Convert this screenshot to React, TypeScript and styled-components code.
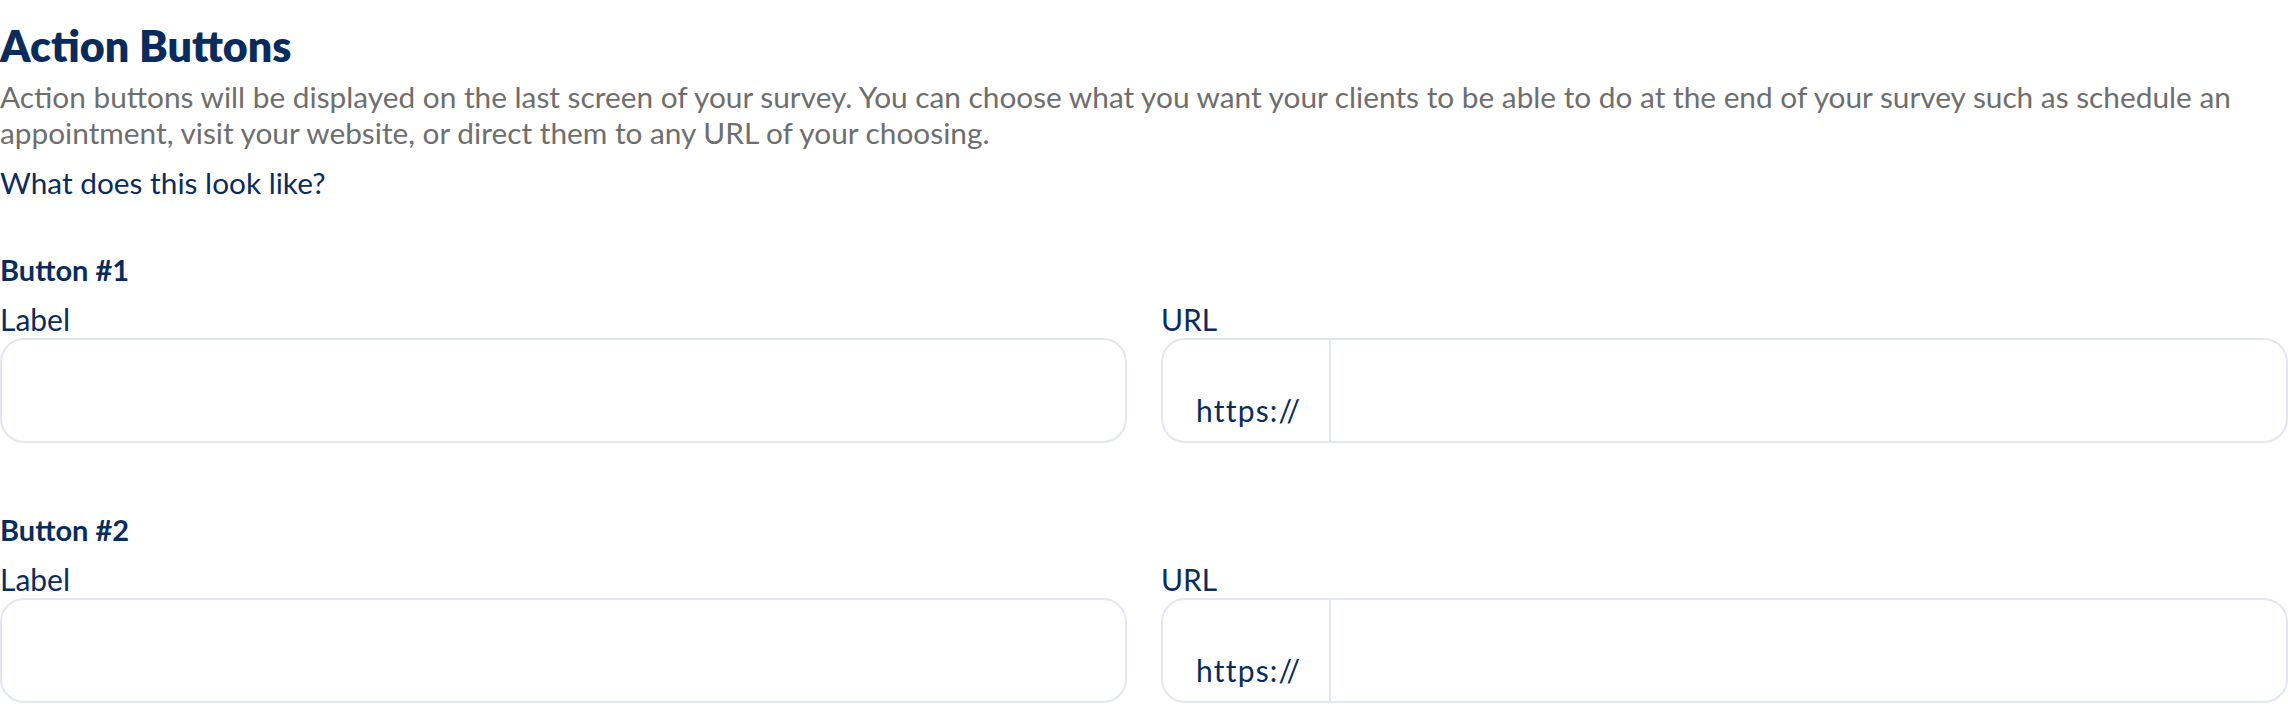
import React from 'react';
import styled, {createGlobalStyle} from 'styled-components';

const NAVY = '#0a2c5c';
const GREY = '#6e6e6e';
const BORDER = '#e2e7ee';

const GlobalStyle = createGlobalStyle`
  * { box-sizing: border-box; }
  body {
    margin: 0;
    background: #ffffff;
    font-family: Lato, "Noto Sans", sans-serif;
  }
`;

const StyledPage = styled.div`
  padding-top: 20px;
  width: 2288px;
`;

const StyledTitle = styled.h1`
  margin: 0;
  font-size: 43px;
  line-height: 52px;
  font-weight: 800;
  color: ${NAVY};
`;

const StyledDescription = styled.p`
  margin: 7px 0 0;
  font-size: 29.8px;
  line-height: 36px;
  color: ${GREY};
`;

const StyledPreviewLink = styled.a`
  display: block;
  margin-top: 14px;
  font-size: 29.8px;
  line-height: 36px;
  color: ${NAVY};
  text-decoration: none;
  cursor: pointer;
`;

const StyledSection = styled.section`
  margin-top: 51px;
  & + & {
    margin-top: 69px;
  }
`;

const StyledSectionHeader = styled.h3`
  margin: 0 0 13px;
  font-size: 29px;
  line-height: 36px;
  font-weight: 700;
  color: ${NAVY};
`;

const StyledFieldGrid = styled.div`
  display: grid;
  grid-template-columns: 1fr 1fr;
  column-gap: 34px;
`;

const StyledField = styled.label`
  display: flex;
  flex-direction: column;
  gap: 1px;
`;

const StyledFieldLabel = styled.span`
  font-size: 30px;
  line-height: 36px;
  color: ${NAVY};
`;

const StyledTextInput = styled.input`
  height: 105px;
  width: 100%;
  border: 2px solid ${BORDER};
  border-radius: 24px;
  padding: 0 30px;
  font-family: inherit;
  font-size: 30px;
  color: ${NAVY};
  outline: none;
`;

const StyledUrlGroup = styled.div`
  display: flex;
  height: 105px;
`;

const StyledPrefix = styled.span`
  display: flex;
  align-items: flex-end;
  flex: 0 0 170px;
  padding: 0 0 13px 33px;
  border: 2px solid ${BORDER};
  border-radius: 24px 0 0 24px;
  font-size: 30px;
  line-height: 36px;
  letter-spacing: 1.2px;
  color: ${NAVY};
`;

const StyledUrlInput = styled(StyledTextInput)`
  flex: 1;
  height: 100%;
  border-left: none;
  border-radius: 0 24px 24px 0;
`;

interface IActionButtonProps {
  index: number;
}

const ActionButtonFields: React.FC<IActionButtonProps> = ({index}) => (
  <StyledSection>
    <StyledSectionHeader>Button #{index}</StyledSectionHeader>
    <StyledFieldGrid>
      <StyledField>
        <StyledFieldLabel>Label</StyledFieldLabel>
        <StyledTextInput type="text" />
      </StyledField>
      <StyledField>
        <StyledFieldLabel>URL</StyledFieldLabel>
        <StyledUrlGroup>
          <StyledPrefix>https://</StyledPrefix>
          <StyledUrlInput type="text" />
        </StyledUrlGroup>
      </StyledField>
    </StyledFieldGrid>
  </StyledSection>
);

const App: React.FC = () => (
  <>
    <GlobalStyle />
    <StyledPage>
      <StyledTitle>Action Buttons</StyledTitle>
      <StyledDescription>
        Action buttons will be displayed on the last screen of your survey.
        You can choose what you want your clients to be able to do at the end
        of your survey such as schedule an appointment, visit your website, or
        direct them to any URL of your choosing.
      </StyledDescription>
      <StyledPreviewLink>What does this look like?</StyledPreviewLink>
      {[1, 2].map((index) => (
        <ActionButtonFields key={index} index={index} />
      ))}
    </StyledPage>
  </>
);

export default App;
